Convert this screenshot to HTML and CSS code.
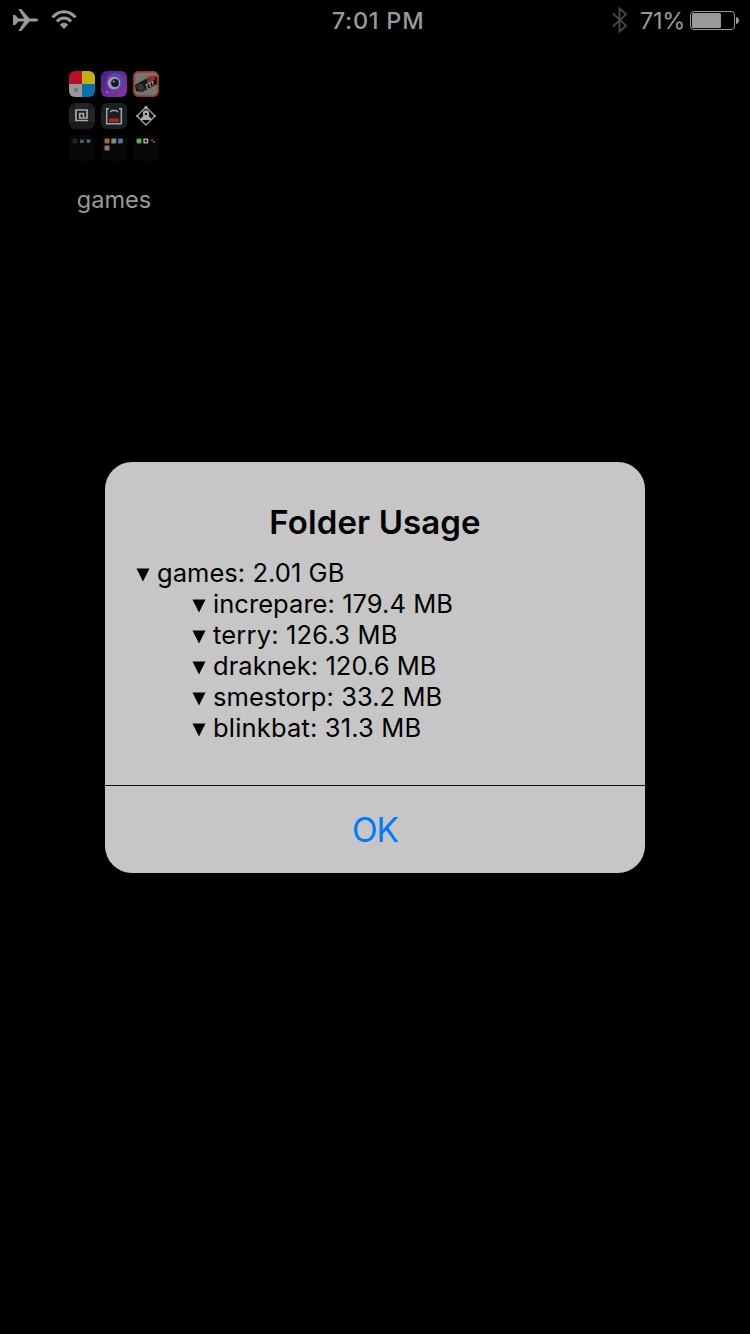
FILE: index.html
```html
<!DOCTYPE html>
<html lang="en">
<head>
<meta charset="utf-8">
<title>Folder Usage</title>
<link rel="stylesheet" href="styles.css">
</head>
<body>
<header class="status">
  <div class="side">
    <svg class="plane" width="26" height="24" viewBox="0 0 26 24"><path d="M0 7h2.200l3.200 3.400h5.800L5.400 1h2.800l8.300 9.400h5.700c2 0 3 .9 3 1.600s-1 1.600-3 1.600h-5.700L8.200 23H5.400l5.800-9.400H5.400L2.200 17H0z"/></svg>
    <svg class="wifi" width="26" height="20" viewBox="0 0 26 20"><path class="arc" d="M1.500 7.400C8-.2 18-.2 24.500 7.400M5.900 11.500c4-4.700 10.200-4.700 14.200 0"/><path d="M8.800 14.700c2.500-2.700 5.900-2.700 8.400 0L13 19z"/></svg>
  </div>
  <time class="clock">7:01 PM</time>
  <div class="side end">
    <svg class="bluetooth" width="16" height="28" viewBox="0 0 16 28"><path d="M1 7.500l13 12.200-6.500 5.800v-23L14 8.300 1 20.500"/></svg>
    <span class="percent">71%</span>
    <svg class="battery" width="50" height="20" viewBox="0 0 50 20"><rect class="shell" x=".5" y="1.500" width="44" height="18" rx="3.500"/><rect x="2" y="3" width="29" height="15" rx="1.500"/><path d="M46 7c2 .5 3 2 3 3.500s-1 3-3 3.500z"/></svg>
  </div>
</header>

<main>
  <section class="folder">
    <div class="tiles">
      <svg class="tile" viewBox="0 0 26 26"><path fill="#b80d2b" d="M0 0h13v13H0z"/><path fill="#bfb00b" d="M13 0h13v13H13z"/><path fill="#999" d="M0 13h13v13H0z"/><path fill="#0870ad" d="M13 13h13v13H13z"/><rect x="5" y="17" width="4" height="4" rx="1" fill="#777"/></svg>
      <svg class="tile" viewBox="0 0 26 26"><defs><linearGradient id="violet" x2="1" y2="1"><stop stop-color="#45208f"/><stop offset="1" stop-color="#8c369d"/></linearGradient></defs><path fill="url(#violet)" d="M0 0h26v26H0z"/><path d="M7 8c-2-2-1-4 1-3 3-4 10-4 12 0 4 3 3 10-1 12l-1 4-3-2-4 3-1-4c-5-1-6-6-3-10z" fill="#5c45a8"/><circle cx="13" cy="12" r="6.300" fill="#9b9aaa"/><circle cx="14" cy="12" r="3.900" fill="#16172c"/><circle cx="12.800" cy="10.500" r="1" fill="#aaa"/><circle cx="6" cy="21" r="1.200" fill="#a759af"/></svg>
      <svg class="tile" viewBox="0 0 26 26"><path fill="#777370" d="M0 0h26v26H0z"/><path d="M2 14L18 5l6 1v7L9 21l-6-1z" fill="#171717"/><path d="M3 15l6-3 3 6-5 3z" fill="#343434"/><path d="M13 8l9-3M14 11l8-4" stroke="#ad2923" stroke-width="2"/><path d="M13.500 13l1 5M16.500 12l1 4M19.500 10l.5 4M12.500 14l8-4" stroke="#aaa" stroke-width="1"/><rect x=".8" y=".8" width="24.400" height="24.400" rx="5" fill="none" stroke="#a62820" stroke-width="1.500"/></svg>
      <svg class="tile" viewBox="0 0 26 26"><path fill="#1b1b1b" d="M0 0h26v26H0z"/><path fill="#252525" d="M6 0h13v6H6zM0 6h6v13H0zM19 6h7v13h-7z"/><path fill="none" stroke="#aaa" stroke-width="1.700" d="M19 17.500H7V7h11v8h-7.300v-4.500h3.800V14"/></svg>
      <svg class="tile" viewBox="0 0 26 26"><path fill="#1b2026" d="M0 0h26v26H0z"/><path fill="none" stroke="#a5a5a5" stroke-width="1.500" d="M8 5.700H5.700v15h14.600v-15H18M9 9l2-1.500h4L17 9"/><path fill="#ad2a18" d="M8 15.500h10V19H8z"/></svg>
      <svg class="tile" viewBox="0 0 26 26"><path fill="none" stroke="#a0a0a0" stroke-width="1.400" d="M13 4l9 9-9 9-9-9z"/><path fill="#aaa" fill-rule="evenodd" d="M11.500 3.300h3v3h-3zM3.500 12h2v2h-2zM20.500 12h2v2h-2zM7 16.500l3-3.500V9c1-2.500 5-2.500 6 0v4l3 3.500v.5H7zM12 10v2h2v-2z"/></svg>
      <svg class="tile" viewBox="0 0 26 26"><path fill="#070707" d="M0 0h26v26H0z"/><circle cx="6" cy="6.300" r="1.700" fill="none" stroke="#475019"/><path fill="#28606a" d="M11 4.500h4V6h-4z"/><path fill="#7b4a24" d="M11 6h4v2h-4z"/><path fill="#1c7993" d="M17.500 4.500h4V6l-1 2h-2l-1-2z"/></svg>
      <svg class="tile" viewBox="0 0 26 26"><path fill="#070707" d="M0 0h26v26H0z"/><rect x="3.500" y="3.500" width="5" height="5" rx="1" fill="#a8693a"/><rect x="10.300" y="3.500" width="5" height="5" rx="1" fill="#5f9c8d"/><path fill="#a77a72" d="M12 5h2v2h-2z"/><rect x="17" y="3.500" width="5" height="5" rx="1" fill="#4a619c"/><path d="M18 8l3-4" stroke="#9690a0"/><rect x="3.500" y="10.500" width="5" height="5" rx="1" fill="#817092"/><path d="M4 15l4-4" stroke="#b67b57"/></svg>
      <svg class="tile" viewBox="0 0 26 26"><path fill="#070707" d="M0 0h26v26H0z"/><rect x="3.500" y="3.500" width="5" height="5" rx="1" fill="#559c35"/><circle cx="6" cy="6" r="1.200" fill="none" stroke="#94b27c" stroke-width=".8"/><rect x="10.300" y="3.500" width="5" height="5" rx="1" fill="#b0b0a5"/><circle cx="12.800" cy="6" r="1.200" fill="#111"/><path fill="#91294e" d="M18 4h2v2h-2z"/><path fill="#716a76" d="M20 6h1.700v2H20z"/></svg>
    </div>
    <span class="folder-name">games</span>
  </section>

  <section class="alert">
    <div class="content">
      <h1 class="title">Folder Usage</h1>
      <ul class="usage">
        <li class="row root"><svg class="mark" viewBox="0 0 14 14"><path d="M.5.500h13L7 13.500z"/></svg><span>games: 2.01 GB</span></li>
        <li class="row"><svg class="mark" viewBox="0 0 14 14"><path d="M.5.500h13L7 13.500z"/></svg><span>increpare: 179.4 MB</span></li>
        <li class="row loose"><svg class="mark" viewBox="0 0 14 14"><path d="M.5.500h13L7 13.500z"/></svg><span>terry: 126.3 MB</span></li>
        <li class="row"><svg class="mark" viewBox="0 0 14 14"><path d="M.5.500h13L7 13.500z"/></svg><span>draknek: 120.6 MB</span></li>
        <li class="row"><svg class="mark" viewBox="0 0 14 14"><path d="M.5.500h13L7 13.500z"/></svg><span>smestorp: 33.2 MB</span></li>
        <li class="row loose"><svg class="mark" viewBox="0 0 14 14"><path d="M.5.500h13L7 13.500z"/></svg><span>blinkbat: 31.3 MB</span></li>
      </ul>
    </div>
    <button class="ok" type="button">OK</button>
  </section>
</main>
</body>
</html>
```
FILE: styles.css
```css
* { box-sizing: border-box; }
body {
  margin: 0;
  height: 1334px;
  overflow: hidden;
  background: #000;
  color: #999;
  font-family: Inter, "Liberation Sans", sans-serif;
}
.status {
  display: grid;
  grid-template-columns: 1fr auto 1fr;
  height: 40px;
  padding: 0 10px 0 13px;
  fill: #999;
}
.side { display: flex; align-items: flex-start; }
.end { justify-content: flex-end; }
.plane { margin-top: 8px; }
.wifi { margin: 10px 0 0 12px; }
.arc { fill: none; stroke: #999; stroke-width: 3; }
.clock {
  margin-left: 3px;
  font-size: 23.500px;
  font-weight: 500;
  line-height: 41px;
  letter-spacing: .75px;
}
.bluetooth {
  margin: 6px 12px 0 0;
  fill: none;
  stroke: #484848;
  stroke-width: 1.800;
}
.percent { font-size: 23.500px; line-height: 41px; letter-spacing: -.3px; }
.battery { margin: 10px 0 0 5px; }
.shell { fill: none; stroke: #999; }
.folder {
  display: flex;
  flex-direction: column;
  align-items: center;
  width: 90px;
  height: 422px;
  margin-left: 69px;
  padding-top: 31px;
}
.tiles { display: grid; grid-template-columns: repeat(3, 26px); gap: 6px; }
.tile { display: block; width: 26px; height: 26px; border-radius: 6px; }
.folder-name { margin-top: 23px; font-size: 23.500px; line-height: 32px; letter-spacing: 0; }
.alert {
  width: 540px;
  height: 411px;
  margin: 0 auto;
  overflow: hidden;
  border-radius: 27px;
  background: #c6c6c6;
  color: #000;
}
.content { height: 324px; padding: 38px 32px 0; border-bottom: 1px solid #111; }
.title {
  margin: 0;
  font-size: 33px;
  font-weight: 600;
  line-height: 44px;
  text-align: center;
  letter-spacing: .1px;
}
.usage { margin: 13px 0 0; padding: 0; list-style: none; }
.row {
  display: flex;
  align-items: center;
  height: 31px;
  padding-left: 56px;
  font-size: 25.500px;
  line-height: 31px;
  letter-spacing: .05px;
  white-space: nowrap;
}
.root { padding-left: 0; }
.loose { letter-spacing: .17px; }
.mark { width: 14px; height: 14px; margin: 5px 7px 0 -1px; }
.ok {
  display: block;
  width: 100%;
  height: 87px;
  padding: 0;
  border: 0;
  background: none;
  color: #007aff;
  font: 400 33.500px/40px Inter, "Liberation Sans", sans-serif;
  letter-spacing: -1px;
}
```
